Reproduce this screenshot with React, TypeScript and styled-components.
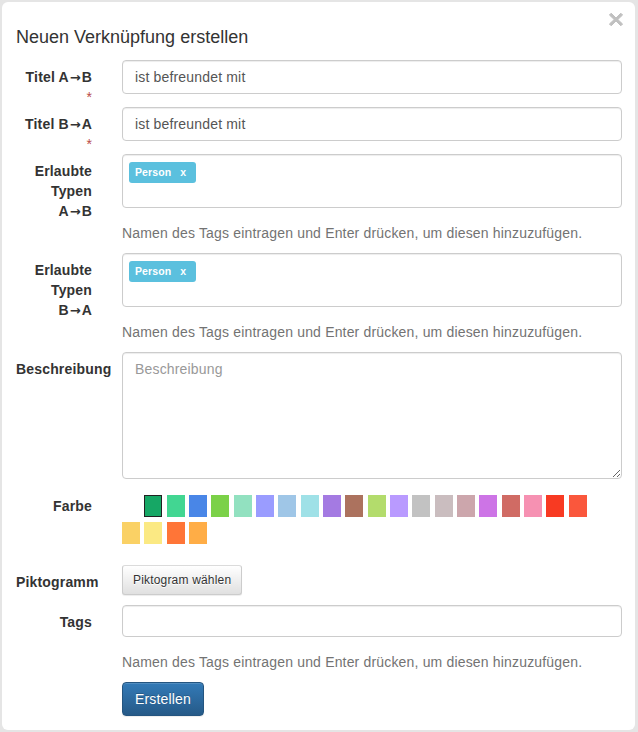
import React from "react";
import styled, { createGlobalStyle } from "styled-components";

const GlobalStyle = createGlobalStyle`
  html, body { margin: 0; padding: 0; }
  body {
    background: #e5e5e5;
    font-family: "Liberation Sans", Arial, Helvetica, sans-serif;
    font-size: 14px;
    line-height: 20px;
    letter-spacing: 0.17px;
    color: #333;
  }
  * { box-sizing: border-box; }
`;

const Modal = styled.div`
  position: relative;
  margin: 2px;
  width: 633px;
  background: #fff;
  border-radius: 6px;
  padding: 22px 13px 14px 14px;
`;

const Title = styled.h4`
  margin: 0 0 10px;
  font-size: 18px;
  line-height: 26px;
  font-weight: normal;
  letter-spacing: 0;
  color: #333;
`;

const CloseButton = styled.button`
  position: absolute;
  top: 10px;
  right: 12px;
  width: 15px;
  height: 15px;
  padding: 0;
  border: 0;
  background: transparent;
  display: flex;
  align-items: center;
  justify-content: center;
  cursor: pointer;
`;

const Row = styled.div<{ $mb?: number }>`
  display: grid;
  grid-template-columns: 76px 500px;
  column-gap: 30px;
  align-items: start;
  margin-bottom: ${(p) => p.$mb ?? 0}px;
`;

const Label = styled.label`
  display: block;
  padding-top: 7px;
  text-align: right;
  font-weight: bold;
  line-height: 20px;
  color: #333;
`;

const Direction = styled.span`
  white-space: nowrap;
`;

const Arrow = styled.span`
  font-family: "DejaVu Sans", sans-serif;
  font-weight: bold;
  font-size: 13px;
  line-height: 1;
  letter-spacing: 0;
  margin: 0 1px;
`;

const Required = styled.span`
  display: block;
  color: #b94a48;
  font-weight: normal;
`;

const Field = styled.div`
  display: flex;
  flex-direction: column;
  align-items: flex-start;
`;

const TextInput = styled.input`
  width: 100%;
  height: 34px;
  padding: 6px 12px;
  font-family: inherit;
  font-size: 14px;
  line-height: 20px;
  letter-spacing: 0.17px;
  color: #555;
  background: #fff;
  border: 1px solid #ccc;
  border-radius: 4px;
  box-shadow: inset 0 1px 1px rgba(0, 0, 0, 0.075);
  outline: none;
`;

const TextArea = styled.textarea`
  width: 100%;
  height: 127px;
  padding: 6px 12px;
  font-family: inherit;
  font-size: 14px;
  line-height: 20px;
  letter-spacing: 0.17px;
  color: #555;
  background: #fff;
  border: 1px solid #ccc;
  border-radius: 4px;
  box-shadow: inset 0 1px 1px rgba(0, 0, 0, 0.075);
  outline: none;
  resize: vertical;
  display: block;
  &::placeholder { color: #999; }
`;

const TagBox = styled.div<{ $h: number }>`
  width: 100%;
  min-height: ${(p) => p.$h}px;
  padding: 7px 6px 0;
  border: 1px solid #ccc;
  border-radius: 4px;
  background: #fff;
  box-shadow: inset 0 1px 1px rgba(0, 0, 0, 0.075);
  margin-bottom: 10px;
  display: flex;
  flex-wrap: wrap;
  align-items: flex-start;
`;

const Tag = styled.span`
  display: inline-flex;
  align-items: center;
  height: 21px;
  padding: 0 10px 0 6px;
  background: #5bc0de;
  border-radius: 3px;
  color: #fff;
  font-size: 10.5px;
  font-weight: bold;
  line-height: 1;
  letter-spacing: 0.1px;
`;

const TagRemove = styled.span`
  margin-left: 9px;
`;

const Help = styled.p`
  margin: 5px 0 10px;
  color: #737373;
  font-size: 14px;
  line-height: 20px;
  white-space: nowrap;
`;

const Palette = styled.div`
  display: flex;
  flex-wrap: wrap;
  column-gap: 4.33px;
  row-gap: 5px;
  width: 470px;
  margin-top: 6px;
`;

const Swatch = styled.span<{ $color: string; $selected?: boolean }>`
  width: 18px;
  height: 22px;
  background: ${(p) => p.$color};
  border: ${(p) => (p.$selected ? "1px solid #222" : "none")};
`;

const DefaultButton = styled.button`
  height: 30px;
  padding: 5px 10px;
  font-family: inherit;
  font-size: 12px;
  line-height: 18px;
  letter-spacing: 0.18px;
  color: #333;
  text-shadow: 0 1px 0 #fff;
  background-image: linear-gradient(to bottom, #fff 0, #e0e0e0 100%);
  border: 1px solid #ccc;
  border-color: #dbdbdb #ccc #ccc;
  border-radius: 3px;
  box-shadow: inset 0 1px 0 rgba(255, 255, 255, 0.15), 0 1px 1px rgba(0, 0, 0, 0.075);
  cursor: pointer;
`;

const PrimaryButton = styled.button`
  height: 34px;
  padding: 6px 12px;
  font-family: inherit;
  font-size: 14px;
  line-height: 20px;
  letter-spacing: 0.17px;
  color: #fff;
  text-shadow: 0 -1px 0 rgba(0, 0, 0, 0.2);
  background-image: linear-gradient(to bottom, #337ab7 0, #265a88 100%);
  border: 1px solid #245580;
  border-radius: 4px;
  box-shadow: inset 0 1px 0 rgba(255, 255, 255, 0.15), 0 1px 1px rgba(0, 0, 0, 0.075);
  cursor: pointer;
`;

const COLORS = [
  "#16a765", "#42d692", "#4986e7", "#7bd148", "#92e1c0", "#9a9cff", "#9fc6e7",
  "#9fe1e7", "#a47ae2", "#ac725e", "#b3dc6c", "#b99aff", "#c2c2c2", "#cabdbf",
  "#cca6ac", "#cd74e6", "#d06b64", "#f691b2", "#f83a22", "#fa573c", "#fad165",
  "#fbe983", "#ff7537", "#ffad46",
];

const HELP = "Namen des Tags eintragen und Enter drücken, um diesen hinzuzufügen.";

function Dir({ from, to }: { from: string; to: string }) {
  return (
    <Direction>
      {from}
      <Arrow>→</Arrow>
      {to}
    </Direction>
  );
}

export default function App() {
  return (
    <>
      <GlobalStyle />
      <Modal>
        <CloseButton aria-label="Schließen">
          <svg width="14" height="15" viewBox="0 0 14 15">
            <path
              d="M2.2 1.2 L7 6 L11.8 1.2 L13.6 3 L8.8 7.5 L13.6 12 L11.8 13.8 L7 9 L2.2 13.8 L0.4 12 L5.2 7.5 L0.4 3 Z"
              fill="#c0c0c0"
              stroke="#c0c0c0"
              strokeWidth="1"
              strokeLinejoin="round"
            />
          </svg>
        </CloseButton>
        <Title>Neuen Verknüpfung erstellen</Title>

        <Row>
          <Label>
            Titel <Dir from="A" to="B" />
            <Required>*</Required>
          </Label>
          <Field>
            <TextInput defaultValue="ist befreundet mit" />
          </Field>
        </Row>

        <Row>
          <Label>
            Titel <Dir from="B" to="A" />
            <Required>*</Required>
          </Label>
          <Field>
            <TextInput defaultValue="ist befreundet mit" />
          </Field>
        </Row>

        <Row>
          <Label>
            Erlaubte Typen <Dir from="A" to="B" />
          </Label>
          <Field>
            <TagBox $h={54}>
              <Tag>
                Person<TagRemove>x</TagRemove>
              </Tag>
            </TagBox>
            <Help>{HELP}</Help>
          </Field>
        </Row>

        <Row>
          <Label>
            Erlaubte Typen <Dir from="B" to="A" />
          </Label>
          <Field>
            <TagBox $h={54}>
              <Tag>
                Person<TagRemove>x</TagRemove>
              </Tag>
            </TagBox>
            <Help>{HELP}</Help>
          </Field>
        </Row>

        <Row $mb={10}>
          <Label>Beschreibung</Label>
          <Field>
            <TextArea placeholder="Beschreibung" />
          </Field>
        </Row>

        <Row $mb={21}>
          <Label>Farbe</Label>
          <Field>
            <Palette>
              <Swatch $color="transparent" />
              {COLORS.map((c, i) => (
                <Swatch key={c} $color={c} $selected={i === 0} />
              ))}
            </Palette>
          </Field>
        </Row>

        <Row $mb={10}>
          <Label>Piktogramm</Label>
          <Field>
            <DefaultButton>Piktogram wählen</DefaultButton>
          </Field>
        </Row>

        <Row>
          <Label>Tags</Label>
          <Field>
            <TagBox $h={32} />
            <Help>{HELP}</Help>
            <PrimaryButton>Erstellen</PrimaryButton>
          </Field>
        </Row>
      </Modal>
    </>
  );
}
